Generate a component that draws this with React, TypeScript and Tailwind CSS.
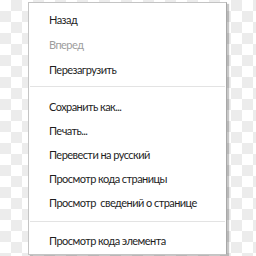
import React from "react";

const items: (string | null | { t: string; d: boolean })[] = [
  "Назад",
  { t: "Вперед", d: true },
  "Перезагрузить",
  null,
  "Сохранить как...",
  "Печать...",
  "Перевести на русский",
  "Просмотр кода страницы",
  "Просмотр  сведений о странице",
  null,
  "Просмотр кода элемента",
];

export default function App() {
  return (
    <div
      className="w-[256px] h-[256px] overflow-hidden bg-[conic-gradient(#ececec_0_25%,#ffffff_0_50%,#ececec_0_75%,#ffffff_0)] bg-[length:22px_22px] pt-[2px] pl-[28px]"
      style={{ fontFamily: 'Lato, "Noto Sans", sans-serif' }}
    >
      <div className="w-[199px] h-[253px] bg-white border border-[#c4c4c4] border-r-[#a8a8a8] shadow-[2px_2px_1px_rgba(0,0,0,0.22)] pt-[5px] flex flex-col">
        {items.map((it, i) =>
          it === null ? (
            <div key={i} className={i === 3 ? "h-[12px] pt-[3px]" : "h-[14px] pt-[6px]"}>
              <div className="h-px bg-[#e3e3e3] mx-[1px]" />
            </div>
          ) : (
            <div
              key={i}
              className={
                (i < 3 ? "h-[25px] " : "h-6 ") +
                "flex items-center pl-[20px] text-[11px] tracking-[-0.55px] whitespace-pre " +
                (typeof it === "object" ? "text-[#9d9d9d]" : "text-[#1e1e1e]")
              }
            >
              {typeof it === "object" ? it.t : it}
            </div>
          )
        )}
      </div>
    </div>
  );
}
